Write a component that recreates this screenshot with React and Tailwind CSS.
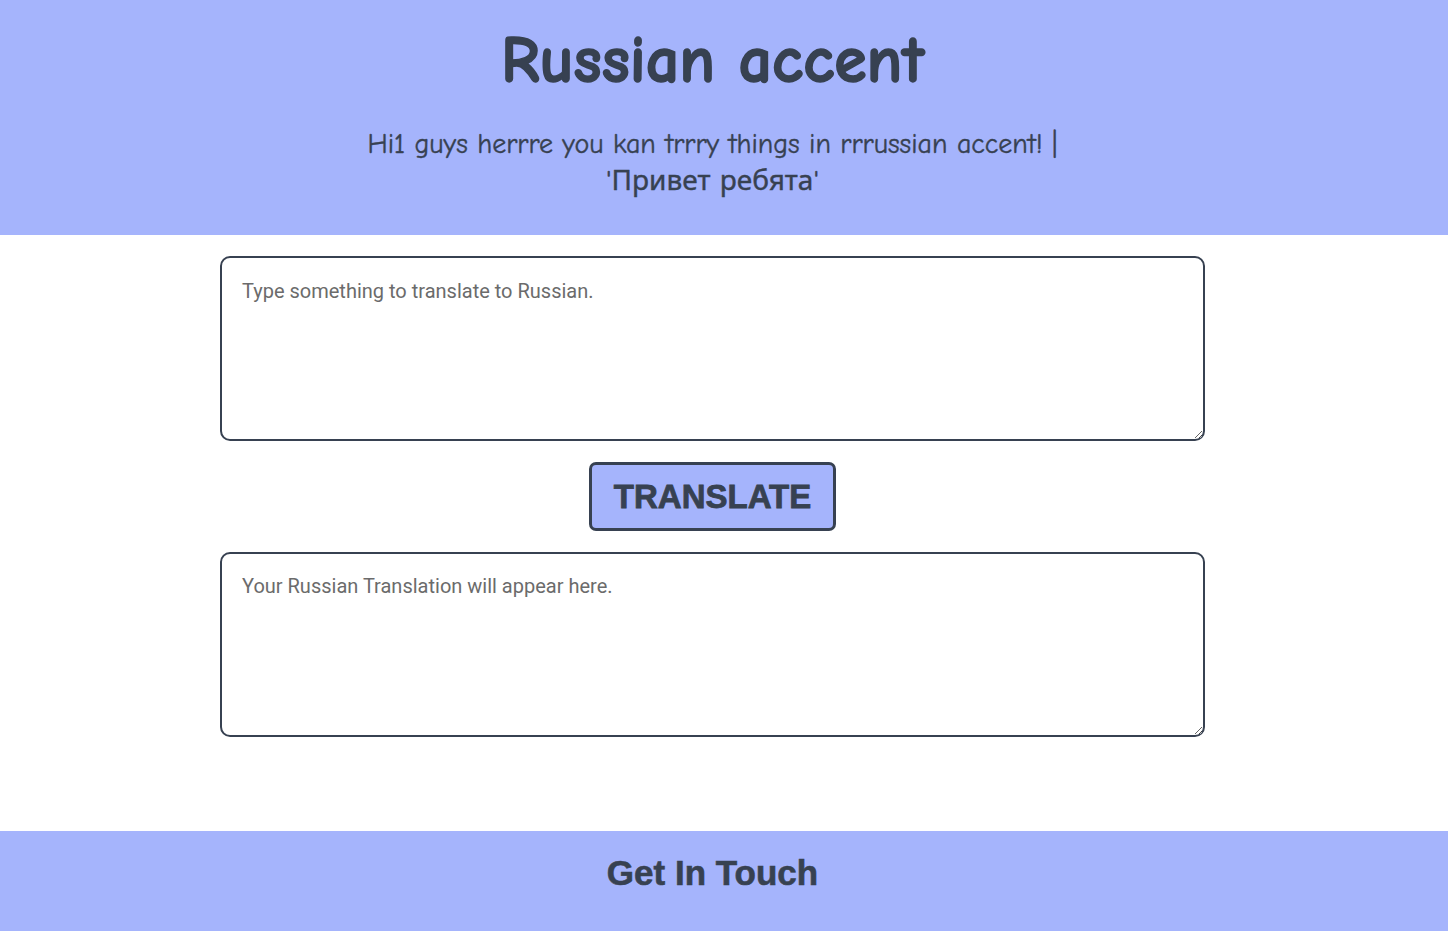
export default function App() {
  const comic = { fontFamily: '"Comic Sans MS", "Comic Neue", "Noto Sans", sans-serif' };
  return (
    <div className="min-h-[931px] flex flex-col bg-white text-[#374151]">
      <header className="bg-[#a5b4fc] h-[235px] flex flex-col items-center pt-[22px] pr-[23px]" style={comic}>
        <h1 className="text-[66px] leading-[78px] font-bold [-webkit-text-stroke:1.5px_#374151]">Russian accent</h1>
        <p className="mt-[26px] text-[28px] leading-[37px] text-center max-w-[720px] [-webkit-text-stroke:0.4px_#374151]">
          Hi1 guys herrre you kan trrry things in rrrussian accent! | 'Привет ребята'
        </p>
      </header>
      <main className="flex-1 flex flex-col items-center pt-[21px] pr-[23px] font-['Roboto',sans-serif]">
        <textarea
          className="w-[985px] h-[185px] border-2 border-[#374151] rounded-[10px] px-[20px] py-[20px] text-[20px] leading-[26px] placeholder:text-[#6b6b6b] outline-none"
          placeholder="Type something to translate to Russian."
        />
        <button className="mt-[21px] w-[247px] h-[69px] bg-[#a5b4fc] border-[3px] border-[#374151] rounded-[7px] text-[33px] font-bold font-['Liberation_Sans',sans-serif] text-[#374151] [-webkit-text-stroke:0.8px_#374151]">
          TRANSLATE
        </button>
        <textarea
          className="mt-[21px] w-[985px] h-[185px] border-2 border-[#374151] rounded-[10px] px-[20px] py-[19px] text-[20px] leading-[26px] placeholder:text-[#6b6b6b] outline-none"
          placeholder="Your Russian Translation will appear here."
        />
      </main>
      <footer className="bg-[#a5b4fc] h-[100px] flex justify-center pt-[20px] pr-[23px] font-['Liberation_Sans',sans-serif]">
        <h2 className="text-[35px] leading-[44px] font-bold [-webkit-text-stroke:0.6px_#374151]">Get In Touch</h2>
      </footer>
    </div>
  );
}
